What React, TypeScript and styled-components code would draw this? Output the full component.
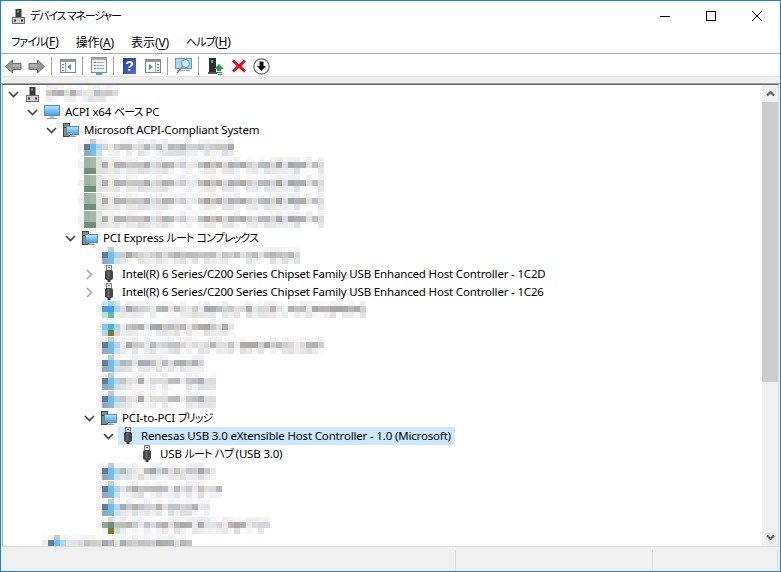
import * as React from 'react';
import styled, { createGlobalStyle } from 'styled-components';

const Global = createGlobalStyle`
    html, body {
        margin: 0;
        padding: 0;
        background: #fff;
    }
`;

const Window = styled.div`
    width: 781px;
    height: 572px;
    box-sizing: border-box;
    border: 1px solid #1883d7;
    display: flex;
    flex-direction: column;
    overflow: hidden;
    background: #fff;
    color: #000;
    font-family: "Noto Sans", "Noto Sans CJK JP", sans-serif;
    font-size: 12px;
    font-feature-settings: "palt";
`;
const Kana = styled.span`
    font-size: 11px;
    letter-spacing: -0.9px;
    word-spacing: 1px;
`;
const TitleBar = styled.div`
    height: 29px;
    flex: none;
    display: flex;
    align-items: center;
    padding-left: 8px;
`;
const TitleText = styled.span`
    margin: 0 0 2px 3px;
    flex: 1;
    font-size: 11px;
    letter-spacing: -1.2px;
`;
const Controls = styled.div`
    display: flex;
    align-items: center;
`;
const ControlButton = styled.div`
    width: 46px;
    height: 29px;
    display: flex;
    align-items: center;
    justify-content: center;
`;
const MenuBar = styled.div`
    height: 23px;
    flex: none;
    display: flex;
    align-items: center;
    padding-left: 10px;
    gap: 17px;
    border-bottom: 1px solid #a8a8b8;
`;
const MenuItem = styled.span`
    letter-spacing: -0.1px;
    u {
        text-underline-offset: 2px;
    }
`;
const ToolBar = styled.div`
    height: 22px;
    flex: none;
    box-sizing: border-box;
    padding: 2px 0 0 1px;
    display: flex;
    align-items: center;
`;
const ToolButton = styled.div`
    width: 23px;
    height: 20px;
    display: flex;
    align-items: center;
    justify-content: center;
`;
const ToolSep = styled.div<{ $after?: number }>`
    width: 1px;
    height: 18px;
    background: #a0a0a0;
    margin: 0 ${p => p.$after ?? 4}px 0 3px;
`;
const Band = styled.div`
    height: 7px;
    flex: none;
    background: #f0f0f0;
    border-top: 1px solid #e3e3e3;
    box-sizing: border-box;
`;
const Body = styled.div`
    flex: 1;
    min-height: 0;
    display: flex;
    background: #f0f0f0;
    border-top: 1px solid #a0a0a0;
    border-left: 1px solid #f0f0f0;
    padding-right: 1px;
`;
const TreePane = styled.div`
    flex: 1;
    min-width: 0;
    display: flex;
    border-top: 1px solid #696969;
    border-left: 1px solid #a8a8a8;
    border-right: 1px solid #dcdcdc;
    border-bottom: 1px solid #dcdcdc;
    overflow: hidden;
`;
const Tree = styled.div`
    flex: 1;
    min-width: 0;
    background: #fff;
    overflow: hidden;
`;
const Row = styled.div<{ $left: number }>`
    height: 18px;
    display: flex;
    align-items: center;
    padding-left: ${p => p.$left}px;
    white-space: nowrap;
`;
const Twist = styled.div`
    width: 19px;
    height: 18px;
    flex: none;
    display: flex;
    align-items: center;
    justify-content: center;
`;
const Item = styled.div<{ $selected?: boolean }>`
    height: 18px;
    display: flex;
    align-items: center;
    gap: 5px;
    padding-right: 4px;
    background: ${p => (p.$selected ? '#cce8ff' : 'transparent')};
`;
const Label = styled.span`
    font-size: 11.5px;
    letter-spacing: -0.17px;
    line-height: 18px;
`;
const Mosaic = styled.svg`
    display: block;
    flex: none;
    overflow: hidden;
`;
const ScrollBar = styled.div`
    width: 16px;
    flex: none;
    display: flex;
    flex-direction: column;
    background: #f0f0f0;
`;
const ScrollArrow = styled.div`
    height: 17px;
    flex: none;
    display: flex;
    align-items: center;
    justify-content: center;
`;
const ScrollTrack = styled.div`
    flex: 1;
    min-height: 0;
`;
const ScrollThumb = styled.div`
    height: 280px;
    background: #cdcdcd;
`;
const StatusBar = styled.div`
    height: 24px;
    flex: none;
    display: flex;
    align-items: center;
    background: #f0f0f0;
    padding-top: 2px;
    box-sizing: border-box;
`;
const StatusCell = styled.div<{ $width: number }>`
    width: ${p => p.$width}px;
    height: 20px;
    flex: none;
    box-sizing: border-box;
    border-right: 1px solid #d9d9d9;
`;

const ComputerIcon = () => (
    <svg width="18" height="18" viewBox="0 0 18 18">
        <rect x="6.5" y="2" width="6" height="9" fill="#3a3a3a" />
        <rect x="8" y="3.5" width="2" height="2" fill="#3fd14a" />
        <rect x="3.5" y="10.5" width="12" height="6" fill="#d4d4d4" stroke="#6a6a6a" />
        <rect x="5" y="12.5" width="2" height="2" fill="#333" />
        <rect x="12" y="12.5" width="2" height="2" fill="#333" />
    </svg>
);

const MonitorIcon = () => (
    <svg width="18" height="18" viewBox="0 0 18 18">
        <defs>
            <linearGradient id="scr" x1="0" y1="0" x2="0" y2="1">
                <stop offset="0" stopColor="#bfe4fb" />
                <stop offset="1" stopColor="#3f9fe4" />
            </linearGradient>
        </defs>
        <rect x="2.5" y="2.5" width="15" height="10" fill="url(#scr)" stroke="#4f8fb8" />
        <rect x="8" y="13" width="4" height="2" fill="#b8c4cc" />
        <rect x="5" y="15" width="10" height="1" fill="#8fa0ac" />
    </svg>
);

const SystemIcon = () => (
    <svg width="18" height="18" viewBox="0 0 18 18">
        <rect x="2.5" y="2.5" width="6" height="13" fill="#8a8a8a" stroke="#444" />
        <rect x="3" y="3" width="3" height="1.5" fill="#48b860" />
        <rect x="3" y="6" width="5" height="1" fill="#333" />
        <rect x="5.5" y="5.5" width="12" height="8" fill="url(#scr)" stroke="#4f8fb8" />
        <rect x="10" y="14" width="3" height="1" fill="#b8c4cc" />
        <rect x="8" y="15" width="7" height="1" fill="#8fa0ac" />
    </svg>
);

const UsbIcon = () => (
    <svg width="18" height="18" viewBox="0 0 18 18">
        <rect x="7.5" y="0.5" width="5" height="5" fill="#e4e4e4" stroke="#808080" />
        <rect x="9" y="2" width="2" height="1" fill="#707070" />
        <rect x="6" y="5" width="8" height="10" rx="2" fill="#464646" />
        <rect x="8.5" y="6" width="2" height="8" fill="#6a6a6a" />
        <rect x="8.5" y="15" width="3" height="2" fill="#383838" />
    </svg>
);

const Chevron = ({ open }: { open: boolean }) =>
    open ? (
        <svg width="11" height="7" viewBox="0 0 11 7">
            <polyline points="1,1 5.5,5.5 10,1" fill="none" stroke="#404040" strokeWidth="1.6" />
        </svg>
    ) : (
        <svg width="7" height="11" viewBox="0 0 7 11">
            <polyline points="1,1 5.5,5.5 1,10" fill="none" stroke="#a6a6a6" strokeWidth="1.6" />
        </svg>
    );

const ArrowIcon = ({ flip }: { flip?: boolean }) => (
    <svg width="17" height="15" viewBox="0 0 17 15" style={flip ? { transform: 'scaleX(-1)' } : undefined}>
        <polygon points="0.5,7.5 7.5,1 7.5,4.5 16,4.5 16,10.5 7.5,10.5 7.5,14" fill="#9a9a9a" stroke="#6a6a6a" />
        <rect x="8" y="5.5" width="7" height="2" fill="#b8b8b8" />
    </svg>
);

const PaneIcon = ({ right }: { right?: boolean }) => (
    <svg width="16" height="14" viewBox="0 0 16 14">
        <rect x="0.5" y="0.5" width="15" height="13" fill="#fff" stroke="#7f8a90" />
        <rect x="1" y="1" width="14" height="2" fill="#8f9aa0" />
        <rect x={right ? 10 : 5} y="3" width="1" height="10" fill="#9aa4aa" />
        <rect x={right ? 12 : 2} y="5" width="2" height="1" fill="#5f7f9a" />
        <rect x={right ? 12 : 2} y="8" width="2" height="1" fill="#5f7f9a" />
        <rect x={right ? 12 : 2} y="11" width="2" height="1" fill="#5f7f9a" />
        {right ? (
            <polygon points="4,5 8,8 4,11" fill="#3fb44a" />
        ) : (
            <polygon points="11,5 7,8 11,11" fill="#3fb44a" />
        )}
    </svg>
);

const PropsIcon = () => (
    <svg width="16" height="18" viewBox="0 0 16 18">
        <rect x="0.5" y="0.5" width="15" height="15" fill="#f4f4f4" stroke="#8a8a8a" />
        <rect x="1" y="1" width="14" height="2" fill="#b0b0b0" />
        <rect x="3" y="5" width="2" height="1" fill="#3a8ad0" />
        <rect x="6" y="5" width="7" height="1" fill="#9ab0c0" />
        <rect x="3" y="8" width="2" height="1" fill="#3a8ad0" />
        <rect x="6" y="8" width="7" height="1" fill="#9ab0c0" />
        <rect x="3" y="11" width="2" height="1" fill="#3a8ad0" />
        <rect x="6" y="11" width="7" height="1" fill="#9ab0c0" />
        <rect x="5" y="16" width="6" height="2" fill="#38a8e8" />
    </svg>
);

const HelpIcon = () => (
    <svg width="13" height="16" viewBox="0 0 13 16">
        <defs>
            <linearGradient id="hlp" x1="0" y1="0" x2="1" y2="1">
                <stop offset="0" stopColor="#2038a0" />
                <stop offset="1" stopColor="#5070d8" />
            </linearGradient>
        </defs>
        <rect x="0" y="0" width="13" height="16" fill="url(#hlp)" />
        <text x="6.5" y="13" textAnchor="middle" fontSize="14" fontWeight="700" fill="#fff" fontFamily="Liberation Sans, sans-serif">?</text>
    </svg>
);

const ScanIcon = () => (
    <svg width="17" height="16" viewBox="0 0 17 16">
        <rect x="0.5" y="0.5" width="16" height="10" fill="#a8d8f8" stroke="#5a9ac8" />
        <rect x="2" y="12" width="13" height="1" fill="#9ab0c0" />
        <circle cx="10.5" cy="5.5" r="4" fill="#d4eefc" stroke="#6a8ea8" />
        <line x1="7.5" y1="8.5" x2="2" y2="15" stroke="#7a8a94" strokeWidth="1.5" />
    </svg>
);

const DriverIcon = () => (
    <svg width="16" height="17" viewBox="0 0 16 17">
        <rect x="1" y="0" width="7" height="14" fill="#2e2e2e" />
        <rect x="3" y="2" width="2" height="3" fill="#3fd14a" />
        <rect x="0" y="14" width="9" height="2" fill="#555" />
        <polygon points="11,6 16,11 13,11 13,13 9,13 9,11 6,11" fill="#20a040" />
        <rect x="9" y="14" width="5" height="1" fill="#20a040" />
        <rect x="10" y="16" width="4" height="1" fill="#20a040" />
    </svg>
);

const RemoveIcon = () => (
    <svg width="14" height="14" viewBox="0 0 14 14">
        <path d="M2 0.5 L7 5 L12 0.5 L14 2.5 L9.5 7 L14 11.5 L12 13.5 L7 9 L2 13.5 L0 11.5 L4.5 7 L0 2.5 Z" fill="#e01020" />
    </svg>
);

const DownIcon = () => (
    <svg width="17" height="17" viewBox="0 0 17 17">
        <circle cx="8.5" cy="8.5" r="7.7" fill="#fff" stroke="#666" strokeWidth="1.2" />
        <polygon points="6.5,3.5 10.5,3.5 10.5,8 13,8 8.5,13 4,8 6.5,8" fill="#111" />
    </svg>
);

type IconKind = 'blue' | 'green' | 'bright' | 'vivid' | 'olive';

const iconCells: Record<IconKind, string[][]> = {
    blue: [['#f4f4f4', '#c4ccc8', '#f0f4f6'], ['#5f8098', '#6cbcf0', '#aed6f0'], ['#94aaba', '#7fb8e0', '#c8e2f2']],
    green: [['#9fb3a4', '#a6b8aa', '#dfe4dc'], ['#9fb3a4', '#a6b8aa', '#dfe4dc'], ['#6f8f76', '#6f8f76', '#dfe4dc']],
    bright: [['#cfe4f4', '#a8d4f0', '#cfe4f4'], ['#4a9cd8', '#3fa0e8', '#a8d4f0'], ['#b8e0d4', '#6cb89c', '#f0f4f4']],
    vivid: [['#eef6fc', '#f0f8fc', '#ffffff'], ['#88c8f0', '#4cb0d8', '#aed4e4'], ['#b0d8ec', '#7a7a30', '#d0d8d0']],
    olive: [['#f6f6f6', '#d8dcd8', '#f4f4f4'], ['#98a49c', '#70907a', '#b8c4bc'], ['#f0f8f0', '#7a7a30', '#d0d8d0']],
};

// pseudo random mosaic over the hidden device names
function makeCells(seed: number, cols: number, textOnly: boolean, kind: IconKind) {
    let s = seed;
    const next = () => {
        s = (s * 1103515 + 12345) & 0x7fffffff;
        return (s >> 8) % 1000 / 1000;
    };
    const ranges = [
        [238, 256],
        [168, 238],
        [222, 256],
    ];
    const out: { x: number; y: number; fill: string }[] = [];
    const lead = textOnly ? 0 : 4;
    for (let c = 0; c < cols; c++) {
        for (let r = 0; r < 3; r++) {
            let fill: string;
            if (!textOnly && c === 0) fill = r === 1 ? '#f0f0f0' : '#fafafa';
            else if (!textOnly && c < lead) fill = iconCells[kind][r][c - 1];
            else {
                const [lo, hi] = ranges[r];
                const g = Math.floor(lo + (hi - lo) * next());
                const t = Math.floor((next() - 0.5) * 12);
                const clamp = (v: number) => Math.max(0, Math.min(255, v));
                fill = `rgb(${clamp(g + t)},${clamp(g)},${clamp(g - t)})`;
            }
            out.push({ x: c * 6, y: r * 6 - 1, fill });
        }
    }
    return out;
}

const Blur = ({ seed, width, kind, textOnly }: { seed: number; width: number; kind?: IconKind; textOnly?: boolean }) => {
    const cols = Math.round(width / 6);
    const cells = makeCells(seed, cols, !!textOnly, kind ?? 'blue');
    return (
        <Mosaic width={cols * 6} height="18" shapeRendering="crispEdges">
            {cells.map((c, i) => (
                <rect key={i} x={c.x} y={c.y} width="6" height="6" fill={c.fill} />
            ))}
        </Mosaic>
    );
};

const level = (n: number) => 4 + 19 * n - 3;

const Node = ({ depth, open, icon, children, selected }: {
    depth: number;
    open?: boolean;
    icon: React.ReactNode;
    children: React.ReactNode;
    selected?: boolean;
}) => (
    <Row $left={level(depth)}>
        <Twist>{open !== undefined && <Chevron open={open} />}</Twist>
        <Item $selected={selected}>
            {icon}
            {children}
        </Item>
    </Row>
);

const BlurRow = ({ x, end, seed, kind }: { x: number; end: number; seed: number; kind?: IconKind }) => (
    <Row $left={x - 3}>
        <Blur seed={seed} width={end - x} kind={kind} />
    </Row>
);

export default function App() {
    return (
        <Window>
            <Global />
            <TitleBar>
                <ComputerIcon />
                <TitleText>デバイス マネージャー</TitleText>
                <Controls>
                    <ControlButton>
                        <svg width="10" height="10" viewBox="0 0 10 10">
                            <rect x="0" y="5" width="10" height="1" fill="#000" />
                        </svg>
                    </ControlButton>
                    <ControlButton>
                        <svg width="10" height="10" viewBox="0 0 10 10">
                            <rect x="0.5" y="0.5" width="9" height="9" fill="none" stroke="#000" />
                        </svg>
                    </ControlButton>
                    <ControlButton>
                        <svg width="10" height="10" viewBox="0 0 10 10">
                            <path d="M0 0 L10 10 M10 0 L0 10" stroke="#000" strokeWidth="1" />
                        </svg>
                    </ControlButton>
                </Controls>
            </TitleBar>
            <MenuBar>
                <MenuItem><Kana>ファイル</Kana>(<u>F</u>)</MenuItem>
                <MenuItem>操作(<u>A</u>)</MenuItem>
                <MenuItem>表示(<u>V</u>)</MenuItem>
                <MenuItem><Kana>ヘルプ</Kana>(<u>H</u>)</MenuItem>
            </MenuBar>
            <ToolBar>
                <ToolButton><ArrowIcon /></ToolButton>
                <ToolButton><ArrowIcon flip /></ToolButton>
                <ToolSep />
                <ToolButton><PaneIcon /></ToolButton>
                <ToolSep />
                <ToolButton><PropsIcon /></ToolButton>
                <ToolSep />
                <ToolButton><HelpIcon /></ToolButton>
                <ToolButton><PaneIcon right /></ToolButton>
                <ToolSep />
                <ToolButton><ScanIcon /></ToolButton>
                <ToolSep $after={5} />
                <ToolButton><DriverIcon /></ToolButton>
                <ToolButton><RemoveIcon /></ToolButton>
                <ToolButton><DownIcon /></ToolButton>
            </ToolBar>
            <Band />
            <Body>
                <TreePane>
                    <Tree>
                        <Node depth={0} open icon={<ComputerIcon />}>
                            <Blur seed={7} width={72} textOnly />
                        </Node>
                        <Node depth={1} open icon={<MonitorIcon />}>
                            <Label>ACPI x64 <Kana>ベース</Kana> PC</Label>
                        </Node>
                        <Node depth={2} open icon={<SystemIcon />}>
                            <Label>Microsoft ACPI-Compliant System</Label>
                        </Node>
                        <BlurRow x={78} end={234} seed={11} />
                        <BlurRow x={78} end={324} seed={23} kind="green" />
                        <BlurRow x={78} end={324} seed={23} kind="green" />
                        <BlurRow x={78} end={324} seed={23} kind="green" />
                        <BlurRow x={78} end={324} seed={23} kind="green" />
                        <Node depth={3} open icon={<SystemIcon />}>
                            <Label>PCI Express <Kana>ルート コンプレックス</Kana></Label>
                        </Node>
                        <BlurRow x={96} end={300} seed={31} />
                        <Node depth={4} open={false} icon={<UsbIcon />}>
                            <Label>Intel(R) 6 Series/C200 Series Chipset Family USB Enhanced Host Controller - 1C2D</Label>
                        </Node>
                        <Node depth={4} open={false} icon={<UsbIcon />}>
                            <Label>Intel(R) 6 Series/C200 Series Chipset Family USB Enhanced Host Controller - 1C26</Label>
                        </Node>
                        <BlurRow x={96} end={366} seed={37} kind="bright" />
                        <BlurRow x={96} end={234} seed={41} kind="vivid" />
                        <BlurRow x={96} end={324} seed={43} />
                        <BlurRow x={96} end={204} seed={47} />
                        <BlurRow x={96} end={216} seed={53} />
                        <BlurRow x={96} end={216} seed={53} />
                        <Node depth={4} open icon={<SystemIcon />}>
                            <Label>PCI-to-PCI <Kana>ブリッジ</Kana></Label>
                        </Node>
                        <Node depth={5} open selected icon={<UsbIcon />}>
                            <Label>Renesas USB 3.0 eXtensible Host Controller - 1.0 (Microsoft)</Label>
                        </Node>
                        <Node depth={6} icon={<UsbIcon />}>
                            <Label>USB <Kana>ルート ハブ</Kana> (USB 3.0)</Label>
                        </Node>
                        <BlurRow x={96} end={216} seed={59} />
                        <BlurRow x={96} end={222} seed={61} />
                        <BlurRow x={96} end={210} seed={67} />
                        <BlurRow x={96} end={270} seed={71} kind="olive" />
                        <BlurRow x={42} end={192} seed={73} />
                    </Tree>
                    <ScrollBar>
                        <ScrollArrow>
                            <svg width="9" height="7" viewBox="0 0 9 7">
                                <polyline points="1,5.5 4.5,2 8,5.5" fill="none" stroke="#606060" strokeWidth="2.2" />
                            </svg>
                        </ScrollArrow>
                        <ScrollTrack>
                            <ScrollThumb />
                        </ScrollTrack>
                        <ScrollArrow>
                            <svg width="9" height="7" viewBox="0 0 9 7">
                                <polyline points="1,1.5 4.5,5 8,1.5" fill="none" stroke="#606060" strokeWidth="2.2" />
                            </svg>
                        </ScrollArrow>
                    </ScrollBar>
                </TreePane>
            </Body>
            <StatusBar>
                <StatusCell $width={455} />
                <StatusCell $width={197} />
                <StatusCell $width={125} />
            </StatusBar>
        </Window>
    );
}
